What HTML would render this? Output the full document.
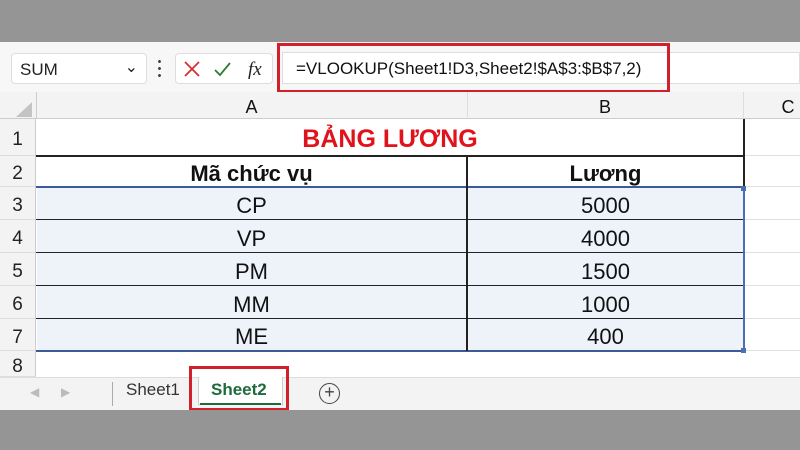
<!DOCTYPE html><html><head><meta charset="utf-8"><style>
*{margin:0;padding:0;box-sizing:border-box}
body{width:800px;height:450px;overflow:hidden;background:#fff;font-family:"Liberation Sans",sans-serif;position:relative}
.a{position:absolute}
.rh{position:absolute;left:0;width:36px;background:#f3f3f3;border-right:1px solid #ccc;border-bottom:1px solid #ddd;font-size:19px;color:#222;display:flex;align-items:center;justify-content:center;padding-top:6px}
.row{position:absolute;left:36px;width:764px;border-bottom:1px solid #e0e0e0}
.c{position:absolute;display:flex;align-items:center;justify-content:center;font-size:22px;color:#111;padding-top:4px}
</style></head><body>
<div class="a" style="left:0;top:0;width:800px;height:42px;background:#959595"></div>
<div class="a" style="left:0;top:42px;width:800px;height:50px;background:#f7f7f7"></div>
<div class="a" style="left:11px;top:53px;width:136px;height:31px;background:#fff;border:1px solid #ddd;border-radius:4px;font-size:17px;padding:6px 0 0 8px;color:#222">SUM<span style="position:absolute;right:8px;top:3px;font-size:16px">&#8964;</span></div>
<div class="a" style="left:158px;top:58px;width:3px;height:20px;background:radial-gradient(circle,#444 1.3px,transparent 1.6px) 0 0/3px 7px"></div>
<div class="a" style="left:175px;top:53px;width:98px;height:31px;background:#fff;border:1px solid #ddd;border-radius:4px"></div>
<svg class="a" style="left:182px;top:59px" width="90" height="20"><path d="M3 3L17 17M17 3L3 17" stroke="#d32f2f" stroke-width="1.8" fill="none"/><path d="M33 11l5 5 10-12" stroke="#2e7d32" stroke-width="1.8" fill="none"/><text x="66" y="16" font-family="Liberation Serif" font-style="italic" font-size="19" fill="#222">fx</text></svg>
<div class="a" style="left:282px;top:52px;width:518px;height:32px;background:#fff;border:1px solid #ddd"></div>
<div class="a" style="left:296px;top:59px;font-size:17px;color:#111">=VLOOKUP(Sheet1!D3,Sheet2!$A$3:$B$7,2)</div>
<div class="a" style="left:277px;top:43px;width:393px;height:50px;border:3px solid #d0202a"></div>
<div class="a" style="left:0;top:92px;width:800px;height:27px;background:#f3f3f3;border-bottom:1px solid #ccc"></div>
<svg class="a" style="left:14px;top:100px" width="20" height="18"><path d="M18 2V17H2z" fill="#c4c4c4"/></svg>
<div class="a" style="left:36px;top:92px;width:1px;height:27px;background:#ccc"></div>
<div class="a" style="left:467px;top:92px;width:1px;height:27px;background:#ddd"></div>
<div class="a" style="left:743px;top:92px;width:1px;height:27px;background:#ddd"></div>
<div class="c" style="left:36px;top:92px;width:431px;height:27px;font-size:18px">A</div>
<div class="c" style="left:467px;top:92px;width:276px;height:27px;font-size:18px">B</div>
<div class="c" style="left:743px;top:92px;width:90px;height:27px;font-size:18px">C</div>
<div class="rh" style="top:119px;height:37px">1</div>
<div class="rh" style="top:156px;height:31px">2</div>
<div class="rh" style="top:187px;height:33px">3</div>
<div class="rh" style="top:220px;height:33px">4</div>
<div class="rh" style="top:253px;height:33px">5</div>
<div class="rh" style="top:286px;height:33px">6</div>
<div class="rh" style="top:319px;height:32px">7</div>
<div class="rh" style="top:351px;height:26px">8</div>
<div class="a" style="left:37px;top:188px;width:706px;height:163px;background:#eef3fa"></div>
<div class="row" style="top:119px;height:37px"></div>
<div class="row" style="top:156px;height:31px"></div>
<div class="row" style="top:187px;height:33px"></div>
<div class="row" style="top:220px;height:33px"></div>
<div class="row" style="top:253px;height:33px"></div>
<div class="row" style="top:286px;height:33px"></div>
<div class="row" style="top:319px;height:32px"></div>
<div class="a" style="left:36px;top:155px;width:708px;height:2px;background:#222"></div>
<div class="a" style="left:36px;top:186px;width:708px;height:2px;background:#3a5a9a"></div>
<div class="a" style="left:36px;top:219px;width:708px;height:1px;background:#222"></div>
<div class="a" style="left:36px;top:252px;width:708px;height:1px;background:#222"></div>
<div class="a" style="left:36px;top:285px;width:708px;height:1px;background:#222"></div>
<div class="a" style="left:36px;top:318px;width:708px;height:1px;background:#222"></div>
<div class="a" style="left:36px;top:350px;width:708px;height:2px;background:#3a5a9a"></div>
<div class="a" style="left:466px;top:156px;width:2px;height:195px;background:#222"></div>
<div class="a" style="left:743px;top:119px;width:2px;height:232px;background:#222"></div>
<div class="a" style="left:743px;top:187px;width:2px;height:164px;background:#4a6fb5"></div>
<div class="a" style="left:741px;top:186px;width:5px;height:5px;background:#4a6fb5"></div>
<div class="a" style="left:741px;top:348px;width:5px;height:5px;background:#4a6fb5"></div>
<div class="c" style="left:36px;top:119px;width:708px;height:37px;color:#e0121c;font-weight:bold;font-size:25px">BẢNG LƯƠNG</div>
<div class="c" style="left:36px;top:156px;width:431px;height:31px;font-weight:bold">Mã chức vụ</div>
<div class="c" style="left:467px;top:156px;width:277px;height:31px;font-weight:bold">Lương</div>
<div class="c" style="left:36px;top:187px;width:431px;height:33px">CP</div><div class="c" style="left:467px;top:187px;width:277px;height:33px">5000</div>
<div class="c" style="left:36px;top:220px;width:431px;height:33px">VP</div><div class="c" style="left:467px;top:220px;width:277px;height:33px">4000</div>
<div class="c" style="left:36px;top:253px;width:431px;height:33px">PM</div><div class="c" style="left:467px;top:253px;width:277px;height:33px">1500</div>
<div class="c" style="left:36px;top:286px;width:431px;height:33px">MM</div><div class="c" style="left:467px;top:286px;width:277px;height:33px">1000</div>
<div class="c" style="left:36px;top:319px;width:431px;height:32px">ME</div><div class="c" style="left:467px;top:319px;width:277px;height:32px">400</div>
<div class="a" style="left:0;top:377px;width:800px;height:33px;background:#f3f3f3;border-top:1px solid #ddd"></div>
<div class="a" style="left:30px;top:385px;font-size:12px;color:#bbb">&#9664;</div>
<div class="a" style="left:61px;top:385px;font-size:12px;color:#bbb">&#9654;</div>
<div class="a" style="left:112px;top:382px;width:1px;height:24px;background:#aaa"></div>
<div class="a" style="left:126px;top:380px;font-size:17px;color:#333">Sheet1</div>
<div class="a" style="left:198px;top:377px;width:85px;height:28px;background:#fff;border:1px solid #ccc;border-top:none"></div>
<div class="a" style="left:200px;top:403px;width:81px;height:2px;background:#1e6b3c"></div>
<div class="a" style="left:211px;top:380px;font-size:17px;font-weight:bold;color:#1e6b3c">Sheet2</div>
<div class="a" style="left:189px;top:366px;width:100px;height:45px;border:3px solid #d0202a"></div>
<div class="a" style="left:319px;top:383px;width:21px;height:21px;border:1.5px solid #444;border-radius:50%;font-size:18px;line-height:17px;text-align:center;color:#444">+</div>
<div class="a" style="left:0;top:410px;width:800px;height:40px;background:#959595"></div>
</body></html>
